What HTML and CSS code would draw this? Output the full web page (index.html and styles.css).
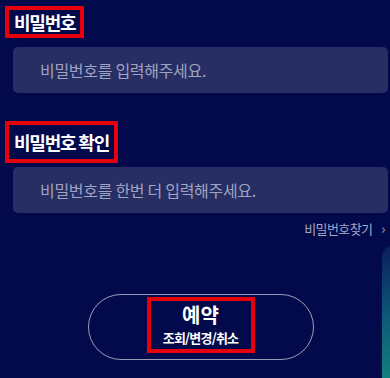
FILE: index.html
```html
<html>
  <head>
    <meta charset="UTF-8">
    <link rel="stylesheet" href="styles.css">
    <title>비밀번호</title>
  </head>
  <body>
    <div class="form">
      <!-- password -->
      <div class="label_row"><span class="label mark">비밀번호</span></div>
      <input class="field" type="password" placeholder="비밀번호를 입력해주세요.">

      <!-- confirm -->
      <div class="label_row second"><span class="label mark">비밀번호 확인</span></div>
      <input class="field" type="password" placeholder="비밀번호를 한번 더 입력해주세요.">

      <div class="find_row"><a class="find_link" href="#">비밀번호찾기<span class="arrow">›</span></a></div>

      <div class="btn_row">
        <button class="btn_reserve">
          <span class="mark btn_mark">
            <span class="btn_title">예약</span>
            <span class="btn_sub">조회/변경/취소</span>
          </span>
        </button>
      </div>
    </div>
    <div class="side_card"></div>
  </body>
</html>
```

FILE: styles.css
```css
body{
  margin: 0;
  background: #020a4b;
  font-family: "Noto Sans CJK KR", "Noto Sans", sans-serif;
  color: #fff;
  overflow: hidden;
}
.form{
  padding: 6px 2px 0 13px;
}
.mark{
  border: 4px solid #e5000b;
}
.label_row{
  margin-left: -8px;
  height: 32px;
}
.label_row.second{
  margin-top: 28px;
  height: 42px;
}
.label{
  display: inline-block;
  box-sizing: border-box;
  height: 100%;
  padding: 0 5px 0 5px;
  font-size: 18px;
  font-weight: bold;
  letter-spacing: -1.2px;
  line-height: 24px;
}
.label_row.second .label{
  line-height: 34px;
}
.field{
  display: block;
  box-sizing: border-box;
  width: 100%;
  height: 46px;
  margin-top: 9px;
  padding: 0 0 0 27px;
  border: none;
  border-radius: 5px;
  background: #272e63;
  font-family: inherit;
  font-size: 16px;
  letter-spacing: -0.3px;
  color: #fff;
  outline: none;
}
.label_row.second + .field{
  margin-top: 4px;
}
.field::placeholder{
  color: #a0a3c2;
}
.find_row{
  text-align: right;
  margin-top: 5px;
  padding-right: 3px;
}
.find_link{
  font-size: 13px;
  letter-spacing: -0.6px;
  color: #a3a6c4;
  text-decoration: none;
}
.arrow{
  margin-left: 9px;
  font-size: 14px;
}
.btn_row{
  display: flex;
  justify-content: center;
  margin-top: 56px;
}
.btn_reserve{
  width: 226px;
  height: 66px;
  border: 1px solid rgba(255,255,255,0.6);
  border-radius: 33px;
  background: transparent;
  color: #fff;
  font-family: inherit;
  display: flex;
  align-items: center;
  justify-content: center;
  padding: 0;
}
.btn_mark{
  display: flex;
  flex-direction: column;
  align-items: center;
  width: 108px;
  height: 56px;
  box-sizing: border-box;
  margin-top: -4px;
  padding-top: 0;
}
.btn_title{
  font-size: 20px;
  font-weight: bold;
  line-height: 28px;
}
.btn_sub{
  font-size: 13px;
  font-weight: bold;
  letter-spacing: -0.8px;
  line-height: 17px;
}
.side_card{
  position: absolute;
  left: 382px;
  top: 246px;
  width: 40px;
  height: 160px;
  border-radius: 10px 0 0 0;
  background: linear-gradient(#0a1d5c, #0d5a78 45%, #119180);
}
```
